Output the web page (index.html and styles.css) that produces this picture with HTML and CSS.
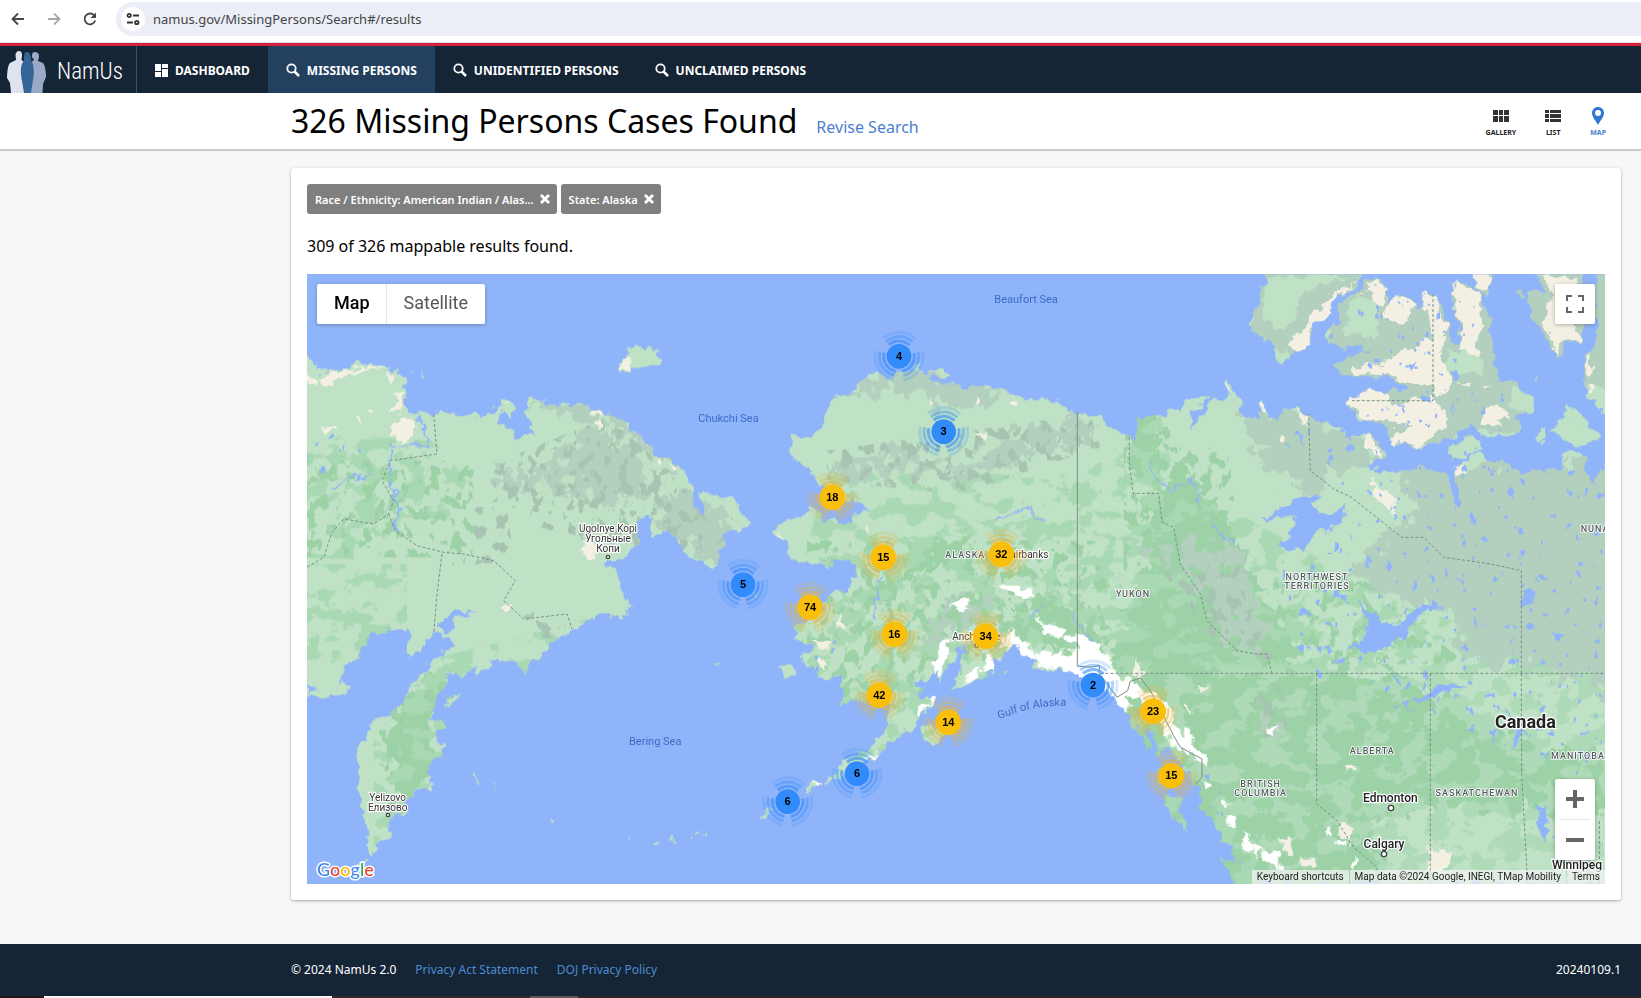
FILE: index.html
```html
<!DOCTYPE html>
<html lang="en">
<head>
<meta charset="utf-8">
<title>NamUs - Missing Persons Search</title>
<link rel="stylesheet" href="styles.css">
</head>
<body>
<div class="browser-bar">
  <button class="browser-btn" aria-label="Back"><svg viewBox="0 0 16 16" width="16" height="16"><path d="M14 8H3M8 2.500 2.500 8 8 13.500" fill="none" stroke="#474747" stroke-width="1.800"/></svg></button>
  <button class="browser-btn" aria-label="Forward"><svg viewBox="0 0 16 16" width="16" height="16"><path d="M2 8h11M8 2.500 13.500 8 8 13.500" fill="none" stroke="#a8a8a8" stroke-width="1.800"/></svg></button>
  <button class="browser-btn" aria-label="Reload"><svg viewBox="0 0 16 16" width="16" height="16"><path d="M13.200 9.500A5.400 5.400 0 1 1 12 4.200L13.500 6" fill="none" stroke="#474747" stroke-width="1.800"/><path d="M14 1.500V7H8.500z" fill="#474747"/></svg></button>
  <div class="address">
    <button class="site-info" aria-label="Site information"><svg viewBox="0 0 14 14" width="14" height="14" fill="none" stroke="#333" stroke-width="1.800"><circle cx="3.200" cy="3.500" r="1.700"/><path d="M7 3.500h6M1 10.500h6"/><circle cx="10.800" cy="10.500" r="1.700"/></svg></button>
    <input class="url" aria-label="Address" value="namus.gov/MissingPersons/Search#/results">
  </div>
</div>

<nav class="nav">
  <a class="logo" href="#" aria-label="NamUs home">
    <svg viewBox="0 0 40 42" width="40" height="42"><path d="M12 0c2 0 3 1.500 3 4s-.5 3.500-.5 5l4 3 1 30H4L3 32 0 27c0-6 1-13 3-15l6-3c0-2-.5-3-.5-5S10 0 12 0z" fill="#dfe3ed"/><path d="M28 1c2 0 4 1 4 4s-1 3.500-1 5l5 2c2 2 3 9 3 14l-3 7-.5 9H24l-1-30 4-3c-1-1.500-2.500-3-2-5 0-2 1-3 3-3z" fill="#9ba9c9"/><path d="M20 1c3 0 4 3 4 8l2 4c1 6 1 12 0 16l-2 13h-7l-2-12c-1-5-2-13 0-17l2-4c0-5 0-8 3-8z" fill="#346597"/></svg>
    <span>NamUs</span>
  </a>
  <a class="nav-item" href="#"><svg viewBox="0 0 13 13" width="13" height="13" fill="#fff"><path d="M0 0h6v7H0zM7 0h6v4H7zM7 5h6v8H7zM0 8h6v5H0z"/></svg>DASHBOARD</a>
  <a class="nav-item active" href="#"><svg viewBox="0 0 14 14" width="14" height="14" fill="none" stroke="#fff"><circle cx="5.500" cy="5.500" r="4.200" stroke-width="1.800"/><path d="m8.500 8.500 4.500 4.500" stroke-width="2.500"/></svg>MISSING PERSONS</a>
  <a class="nav-item" href="#"><svg viewBox="0 0 14 14" width="14" height="14" fill="none" stroke="#fff"><circle cx="5.500" cy="5.500" r="4.200" stroke-width="1.800"/><path d="m8.500 8.500 4.500 4.500" stroke-width="2.500"/></svg>UNIDENTIFIED PERSONS</a>
  <a class="nav-item" href="#"><svg viewBox="0 0 14 14" width="14" height="14" fill="none" stroke="#fff"><circle cx="5.500" cy="5.500" r="4.200" stroke-width="1.800"/><path d="m8.500 8.500 4.500 4.500" stroke-width="2.500"/></svg>UNCLAIMED PERSONS</a>
</nav>

<header class="page-head">
  <h1>326 Missing Persons Cases Found</h1>
  <a class="revise" href="#">Revise Search</a>
  <div class="views">
    <button class="view"><svg viewBox="0 0 16 18" width="16" height="18" fill="#333"><path d="M0 3h5v5H0zM6 3h4v5H6zM11 3h5v5h-5zM0 9h5v6H0zM6 9h4v6H6zM11 9h5v6h-5z"/></svg>GALLERY</button>
    <button class="view"><svg viewBox="0 0 16 18" width="16" height="18" fill="#333"><path d="M0 3h4v3H0zM5 3h11v3H5zM0 7h4v4H0zM5 7h11v4H5zM0 12h4v3H0zM5 12h11v3H5z"/></svg>LIST</button>
    <button class="view selected"><svg viewBox="0 0 12 18" width="12" height="18"><path d="M6 0a5.800 5.800 0 0 1 6 6c0 4-4 8-6 12C4 14 0 10 0 6a5.800 5.800 0 0 1 6-6zm0 3a3 3 0 1 0 0 6 3 3 0 0 0 0-6z" fill="#2f78d0" fill-rule="evenodd"/></svg>MAP</button>
  </div>
</header>

<main class="main">
  <section class="card">
    <div class="tags">
      <span class="tag">Race / Ethnicity: American Indian / Alas...<button aria-label="Remove race filter"><svg viewBox="0 0 10 10" width="10" height="10"><path d="m1 1 8 8M9 1 1 9" stroke="#fff" stroke-width="2.800"/></svg></button></span>
      <span class="tag">State: Alaska<button aria-label="Remove state filter"><svg viewBox="0 0 10 10" width="10" height="10"><path d="m1 1 8 8M9 1 1 9" stroke="#fff" stroke-width="2.800"/></svg></button></span>
    </div>
    <p class="count">309 of 326 mappable results found.</p>
    <div class="map">
      <svg class="map-art" viewBox="0 0 3894 1830" preserveAspectRatio="xMidYMid slice" role="img" aria-label="Map of Alaska, eastern Russia and north-western Canada">
        <defs>
          <filter id="rough" filterUnits="userSpaceOnUse" x="-60" y="-60" width="4014" height="1950" color-interpolation-filters="sRGB">
            <feTurbulence type="fractalNoise" baseFrequency="0.03" numOctaves="3" seed="4"/>
            <feDisplacementMap in="SourceGraphic" scale="42" xChannelSelector="R" yChannelSelector="G"/>
          </filter>
          <filter id="ragged" filterUnits="userSpaceOnUse" x="-60" y="-60" width="4014" height="1950" color-interpolation-filters="sRGB">
            <feTurbulence type="fractalNoise" baseFrequency="0.022" numOctaves="3" seed="9"/>
            <feDisplacementMap in="SourceGraphic" scale="150" xChannelSelector="R" yChannelSelector="G"/>
          </filter>
          <filter id="mottle" filterUnits="userSpaceOnUse" x="0" y="0" width="3894" height="1830" color-interpolation-filters="sRGB">
            <feTurbulence type="fractalNoise" baseFrequency="0.014 0.019" numOctaves="4" seed="12"/>
            <feColorMatrix values="0 0 0 0 0 0 0 0 0 0 0 0 0 0 0 24 0 0 0 -12.500" result="n"/>
            <feComposite in="SourceGraphic" in2="n" operator="in"/>
          </filter>
          <filter id="flecks" filterUnits="userSpaceOnUse" x="0" y="0" width="3894" height="1830" color-interpolation-filters="sRGB">
            <feTurbulence type="fractalNoise" baseFrequency="0.03 0.024" numOctaves="3" seed="31"/>
            <feColorMatrix values="0 0 0 0 0 0 0 0 0 0 0 0 0 0 0 0 24 0 0 -13.800" result="n"/>
            <feComposite in="SourceGraphic" in2="n" operator="in"/>
          </filter>
          <filter id="lakes" filterUnits="userSpaceOnUse" x="0" y="0" width="3894" height="1830" color-interpolation-filters="sRGB">
            <feTurbulence type="fractalNoise" baseFrequency="0.035 0.028" numOctaves="3" seed="77"/>
            <feColorMatrix values="0 0 0 0 0 0 0 0 0 0 0 0 0 0 0 0 0 30 0 -21.300" result="n"/>
            <feComposite in="SourceGraphic" in2="n" operator="in"/>
          </filter>
          <g id="land">
            <g transform="translate(-21 198)">
              <path d="M0 20L21 42 38 58 48 80 40 95 70 100 120 92 160 75 200 72 250 78 285 95 310 120 322 155 316 180 308 200 330 212 355 222 400 220 450 212 460 208 490 220 555 232 575 222 600 182 630 182 640 195 638 225 600 215 602 252 640 275 645 298 670 300 692 285 690 250 682 225 668 215 684 205 682 172 720 182 780 195 865 196 900 210 950 235 985 255 990 275 1040 300 1060 330 1085 355 1130 375 1160 400 1175 430 1178 475 1188 515 1205 515 1210 485 1200 455 1225 465 1285 468 1300 490 1335 525 1345 545 1320 578 1270 575 1268 605 1250 640 1268 650 1240 685 1200 670 1150 640 1140 605 1100 580 1060 590 1050 570 1054 525 1040 525 1015 540 1012 580 1020 600 985 640 960 655 930 655 905 670 915 690 945 685 960 720 962 765 988 800 975 835 905 822 850 850 820 865H0z"/>
              <path d="M955 75L975 40 1005 20 1040 18 1070 38 1088 58 1065 80 1020 88 962 98zM368 85l8 10 2 22-8-6zM336 92l6 8-4 3z"/>
            </g>
            <path transform="translate(-21 978)" d="M0 0H985L988 20 975 55 905 42 850 70 815 92 770 125 735 150 720 175 690 190 670 222 655 195 635 178 575 185 545 210 530 235 530 195 495 215 485 235 475 215 440 225 435 260 415 280 390 330 390 360 410 358 432 370 415 395 418 430 432 440 430 470 410 470 395 480 380 510 392 545 385 568 345 568 330 590 318 610 320 640 270 655 268 695 245 735 210 768 200 740 198 690 185 640 180 590 170 540 168 480 180 435 205 410 215 385 210 365 240 358 275 335 310 300 330 260 365 220 385 190 420 160 450 140 455 118 422 102 400 100 375 130 330 178 318 150 330 115 325 88 280 88 240 100 210 110 180 160 145 190 125 215 120 250 150 258 155 272 130 285 21 295H0zM440 318L455 290 478 275 478 292zM515 518L530 520 535 535 548 553 532 545zM750 657L772 657 766 668zM575 551l10 4-4 3zM1240 185l20 12-15-2zM1170 710L1190 700 1205 690 1200 705zM1068 718l10 4 0 9-8 0zM1110 722l8-8 6 8-8 6zM1212 705h20v3h-20zM160 800L195 775 205 780 175 805zM985 710h8v6h-8zM914 710h8v4zM960 732l14 10zM1383 655L1410 625V640z"/>
            <path transform="translate(1299 138)" d="M152 352L225 345 250 320 265 265 300 225 355 200 380 160 440 165 520 150 535 128 550 140 550 165 570 155 625 152 630 165 605 175 605 190 640 195 680 210 700 195 740 195 775 218 840 225 880 242 930 232 960 245 1000 275 1080 288 1110 320 1160 345 1200 370 1210 350 1180 325 1225 300 1240 278 1255 300 1300 265 1350 250V900H250L240 870 250 840 285 815 325 805 340 775 335 740 330 705 290 715 275 738 240 735 200 725 145 715 140 660 115 655 92 640 125 605 165 595 200 570 230 570 250 600 330 600 385 570 375 545 350 545 300 525 240 500 225 470 190 440 148 400z"/>
            <path transform="translate(1299 918)" d="M350 0L320 30 275 40 250 60 245 90 190 130 165 140 160 170 175 185 215 205 180 240 220 265 235 290 275 292 300 290 300 320 310 345 300 370 345 370 400 350 440 370 445 400 445 440 420 470 385 505 340 530 290 560 280 590 300 595 345 560 395 540 440 500 490 460 535 420 560 390 590 360 560 350 520 345 555 325 510 320 560 295 585 275 600 310 630 260 655 215 690 190 660 240 645 290 640 325 680 320 720 295 760 275 765 240 790 220 830 205 860 235 890 245 890 265 960 275 1010 280 1050 300 1080 320 1110 345 1130 370 1160 390 1180 430 1200 470 1225 520 1230 490 1215 450 1250 460 1240 500 1250 530 1280 500 1330 560 1365 615 1385 650 1375 690 1420 720 1440 780 1460 800 1500 850V0zM112 268L150 255 172 270 168 288 130 290zM545 450L570 430 600 440 615 470 580 490 550 485zM1280 650L1330 655 1320 690 1350 760 1310 730 1285 690zM197 632L205 612 230 600 246 608 225 624zM250 600L272 582 280 590 260 604zM62 718L66 700 90 685 105 690 85 702zM30 500l10 2zM1242 580L1270 575 1275 610 1255 600zM780 290L800 262 806 268zM46 46l16-6-4 14z"/>
            <path transform="translate(2529 -12)" d="M-40 450L0 430 50 440 100 400 170 378 175 390 120 430 60 500 70 520 130 465 190 390 240 375 220 345 235 340 260 375 275 425 320 455 330 425 330 400 345 380 352 425 380 455 395 412 440 412 475 430 490 450 550 465 600 490 640 490 680 505 705 540 700 560 665 580 665 595 700 605 760 608 820 590 850 590 890 620 905 670 935 720 925 660 910 600 940 575 980 550 1030 575 1060 570 1090 600 1150 605 1230 605 1235 560 1275 540 1310 575 1315 620 1340 650 1345 590 1365 575H1400V960H-40z"/>
            <path transform="translate(2529 888)" d="M-30 0H1400V942H345L320 910 270 870 265 835 230 790 195 760 190 720 150 700 135 600 100 540-30 300zM215 868L260 870 300 895 330 920 350 960H265L240 900z"/>
          </g>
          <g id="isles" transform="translate(2529 -12)">
            <path d="M350-20H660L620 50 555 85 520 150 490 165 480 235 430 245 400 278 385 265 370 230 345 215 330 190 303 185 315 130 330 100 325 70 345 40z"/>
            <path d="M705 60L700 30 660 30 600 75 555 120 570 150 535 175 533 215 570 240 660 235 590 260 555 290 580 325 640 325 700 320 750 335 785 360 690 360 620 372 592 392 600 420 630 455 700 460 720 480 725 520 780 530 850 525 920 500 960 460 1000 490 1060 505 1110 490 1120 460 1085 435 1145 430 1150 380 1100 340 1060 325 1025 285 1035 235 1020 150 1000 100 990 70 950 35 910 30 905 100 925 170 930 210 900 215 885 120 860 90 845 70 820 75 835 95 800 130 800 100 740 70 720 95zM890 555L905 525 960 505 995 505 990 540 940 560 900 568zM1165 485l20-10 0 20-15 20-8-5zM1160 325h12v14h-12z"/>
            <path d="M1095 70L1115 62 1140 100 1145 140 1170 165 1195 220 1225 255 1245 240 1245 210 1285 218 1300 180V-20H1120L1175 45 1175 80 1150 60 1130 80zM1335-20H1400V430H1365L1325 395 1302 360 1305 260 1325 240 1340 200zM1200 480L1235 460 1245 410 1260 405 1300 440 1325 475 1345 505 1305 535 1240 510zM950-20H1028L1025 50 1005 78 980 50z"/>
          </g>
          <mask id="land-mask" maskUnits="userSpaceOnUse" x="0" y="0" width="3894" height="1830"><g filter="url(#rough)" fill="#fff"><use href="#land"/><use href="#isles"/></g></mask>
          <g id="rings" fill="none" stroke-width="9">
            <circle r="46" pathLength="360" stroke-dasharray="90 24 90 36 84 36" transform="rotate(-12)" opacity=".6"/>
            <circle r="59" pathLength="360" stroke-dasharray="90 24 90 36 84 36" transform="rotate(-12)" opacity=".4"/>
            <circle r="72" pathLength="360" stroke-dasharray="90 24 90 36 84 36" transform="rotate(-12)" opacity=".2"/>
          </g>
          <g id="blue" class="blue"><use href="#rings"/><circle r="37"/></g>
          <g id="gold" class="gold"><use href="#rings"/><circle r="39"/></g>
        </defs>
        <rect width="3894" height="1830" fill="#90b4fa"/>
        <g mask="url(#land-mask)">
          <rect width="3894" height="1830" fill="#bfe1c5"/>
          <!-- forest -->
          <g filter="url(#ragged)" fill="#9cd2a6">
            <path d="M2420 1160L2500 900 2530 700 2620 560 2740 700 2860 950 3000 1180 3280 1200 3500 1330 3700 1420 3940 1420V1640L3600 1600 3370 1600 3190 1640 3240 1860H2400z"/>
            <path d="M2460 460l70-40 40 110-40 80-50-20z"/>
            <path d="M320 1250L420 1200 440 1260 370 1330 380 1480 360 1560 300 1600 240 1560 260 1420 230 1380z"/>
            <path d="M2100 980L2300 1000 2400 1100 2300 1160 2100 1060z"/>
            <path d="M1640 1020L1700 960 1760 900 1900 800 1980 780 1960 830 1800 920 1720 1000z"/>
          </g>
          <g filter="url(#mottle)" fill="#a9d9b3">
            <path d="M0 480L380 500 480 620 420 740 240 760 220 860 0 850zM0 870H300V1180H0zM400 1150L900 1020 700 1200 430 1230zM340 1180H460V1500L380 1520 200 1720V1400z"/>
            <path d="M1560 600H2330L2560 420 2600 600 2760 700 3300 1000 3894 1180V1830H2500L2300 1250 1500 1500 1450 1000z"/>
          </g>
          <!-- tundra and mountain ground -->
          <g filter="url(#ragged)" fill="#b3cfbd">
            <path d="M570 590L740 590 790 500 900 460 960 520 1040 600 1000 650 930 700 860 680 820 640 720 640 600 650z"/>
            <path d="M1040 680l100-30 130 80-10 160-60-30-40-60-80-20z"/>
            <path d="M640 380l120 0 140 20 100 60 100 80 20 60-80-60-120-90-160-30z"/>
            <path d="M1680 300L1850 280 2070 350 2040 400 1880 380 1820 350 1700 350 1600 380z"/>
            <path d="M1880 580L2000 560 2120 480 2200 450 2340 450 2380 480 2280 520 2120 560 1980 600z"/>
            <path d="M1580 570l240-40 80 60-100-10-200 40z"/>
            <path d="M2460 820L2620 790 2760 800 2820 900 2880 1060 2850 1140 2780 1120 2720 990 2600 870z"/>
            <path d="M1860 1120l10-90 140-80 60 20-120 100z"/>
            <path d="M2800 420L2960 400 3200 500 3250 560 3100 580 3050 650 2960 640 2860 560z"/>
            <path d="M3260 580L3940 560V1280L3760 1200 3640 1180 3480 1160 3420 1020 3200 960 3130 880 3250 770 3340 720z"/>
            <path d="M2840 1280l60 60 40 60-30 20-60-60z"/>
          </g>
          <g filter="url(#flecks)" fill="#a6c4b1">
            <path d="M560 570L900 430 1100 600 1250 800 1150 850 850 820 560 700zM330 700L600 700 620 860 420 880zM1560 530L2350 420 2380 520 1950 660 1560 620zM2460 760L2780 760 2900 1160 2740 1120zM2840 1240h100v180h-100zM1850 960h260v160h-260zM640 1010l120 10 30 80-100-10z"/>
          </g>
          <g filter="url(#flecks)" fill="#9cd2a6"><path d="M0 560H500V850H0zM1500 800H2400V1300H1500zM2900 900H3150L3480 1170H2900zM2450 520H2780V900H2450z"/></g>
          <g filter="url(#mottle)" fill="#aedab8"><path d="M2560 1180H3894V1500H2560zM2700 1500H3894V1830H2900z"/></g>
          <g transform="translate(2529 -12)" filter="url(#rough)">
            <path fill="#b3cfbd" d="M300-20H1400V350L1150 340 1110 490 1000 480 920 500 850 530 740 530 590 400 540 320 530 150 450 270 300 190z"/>
            <path fill="#bfe1c5" d="M345 20L600 20 460 60 440 130 410 180 340 150zM600 90L690 80 680 200 580 190zM890 240L980 240 1000 310 890 310zM1080 340L1150 380 1140 430 1070 400zM1250 430l90 70-50 30-80-50z"/>
          </g>
          <!-- bare ground -->
          <g filter="url(#rough)" fill="#f3efe3">
            <g transform="translate(2529 -12)"><path d="M640 20L560 80 520 150 480 190 485 235 430 245 410 230 460 170 540 80 590 50zM655 50L690 28 708 70 690 110 650 60 610 90zM735 72L800 105 760 165 710 160 700 130zM600 285L700 280 780 230 860 200 870 350 790 340 700 310 620 318zM592 392L620 370 700 362 720 400 850 380 900 450 860 490 800 525 725 515 740 480 790 475 720 450 640 455zM910 30L985 65 995 120 980 260 930 230 940 180 910 110zM820 75L850 75 890 170 870 240 905 330 880 380 850 370 850 200zM950 12H1028L1020 60 1000 60zM1095 65L1140 140 1110 110zM1180 20H1280L1260 130 1290 210 1240 210 1220 250 1180 150 1210 80zM1010 410L1040 400 1080 440 1040 450 1060 480 990 455zM640 490L695 530 690 560 650 535zM670 630L735 690 735 730 670 680zM915 590L945 580 940 610 920 620zM440 415L475 430 470 475zM335 390L350 390 350 430 330 430zM225 345L245 370 225 360zM395 485L405 515 380 510zM1310 260h15v50h-15zM1315 340h15v35h-15zM930 340l30 0-10 20zM1000 352l20 0-5 14z"/></g>
            <g transform="translate(-21 198)"><path d="M268 255L300 228 345 245 352 285 320 305 265 290zM60 110L120 95 200 78 250 82 180 95 110 120 90 140zM21 100L55 115 50 140 25 125zM260 85L280 110 270 135zM290 150L315 160 300 215 260 215 285 195zM70 260L105 260 85 280zM165 220l10 0 0 18-10 0zM205 215l15-4-10 15zM870 205L910 215 915 228 880 222zM885 245h18v12h-18zM1070 350l12 20-12 0zM1105 378l25 10-10 8zM850 600L895 630 880 660 850 640zM975 45h20v40L965 95l0-15zM600 185l30 0 0 8zM600 800l30-8-5 18z"/></g>
            <g transform="translate(1299 918)"><path d="M210 185L280 185 270 205 225 205zM220 230L265 235 260 268zM295 110h12v30h-12zM775 165L830 165 820 210 780 205zM1180 240l20 10 10 50-30-20zM1335 370l15 20-15 5zM1380 315l20 10-20 10z"/></g>
            <g transform="translate(2529 888)"><path d="M835 835L910 850 895 890 870 920 835 890zM565 760L615 775 600 820 575 800zM455 865L495 870 490 900 460 890zM395 805L425 820 425 865 400 840zM585 590h22v14h-22zM150 345l18 0-10 18z"/></g>
            <g transform="translate(1299 138)"><path d="M570 228l15 25-10 0zM710 225l12 20-20 10zM805 250l25-10-5 22zM700 340l38 0-5 22zM305 570l40 10-20 20zM115 645l25 4-20 8zM380 615l10 15-14 0z"/></g>
          </g>
          <!-- glaciers -->
          <g filter="url(#rough)" fill="#fff" stroke="#fff" stroke-width="6">
            <g transform="translate(1299 918)"><path d="M890 220L960 220 1020 215 1020 195 975 175 1010 165 1060 190 1110 235 1110 265 1140 300 1180 300 1200 340 1240 340 1280 380 1310 440 1330 480 1400 530 1400 555 1360 530 1290 480 1270 430 1200 350 1150 345 1165 385 1150 390 1100 340 1060 300 1000 280 900 250zM820 160L850 190 890 240 840 225 810 190zM900 120L975 150 970 165 920 160zM580 280L590 220 630 165 620 220 600 285zM675 315L690 280 720 260 715 290zM735 275L740 240 765 240 755 275zM640 75L690 50 690 75 650 95zM780 20L830 20 885 45 870 55 790 30zM530 385L560 378 540 405zM1335 445L1360 480 1335 490zM1400 605l14 20-14 4zM1450 655l12 18-12 0zM1465 710l22 0 0 22-18 0zM385 522l15 4-20 10zM575 358l12 4-14 8zM220 605l22 0-6 12z"/></g>
            <g transform="translate(2529 888)"><path d="M280 790L300 820 305 840 285 830zM310 830l20 10-10 22zM340 840L390 850 390 895 345 870zM535 775l10 10-10 10zM610 870l12 10-6 20zM565 815h12v12h-12zM355 472h14v14h-14z"/></g>
          </g>
          <!-- lakes and rivers -->
          <g filter="url(#rough)" fill="#90b4fa">
            <g transform="translate(2529 -12)"><path d="M330 745L380 720 440 690 525 672 490 705 500 730 560 725 590 700 580 750 530 785 500 780 455 850 430 835 385 830 430 800 420 770 440 740 380 745zM540 820h15v30h-12zM725 715l20 30-10 10zM745 395l20 4-8 12zM765 285l35-8-15 22z"/></g>
            <g transform="translate(2529 888)"><path d="M625 95L660 130 700 155 750 165 800 110 870 105 870 118 820 120 760 195 720 215 700 245 640 250 600 230 640 210 655 170zM800 395L850 345 900 340 950 355 870 370 820 395zM760 390l20 4-10 25zM1120 70L1145 60 1145 105 1120 110zM1065 415L1110 460 1105 510 1080 545 1100 490zM550 70l35 4 5 16-35-6zM1155 710L1190 710 1190 820 1170 790zM945 490l25-20 0 14z"/></g>
            <g transform="translate(-21 978)"><path d="M425 95L430 40 475 28 500 40 535 42 465 55 455 100zM21 252L55 270 21 278z"/></g>
            <path transform="translate(1299 138)" d="M565 175l30-8 15 16-25 10z"/>
          </g>
          <g filter="url(#lakes)" fill="#90b4fa"><path d="M2850 450L3894 560V1400L3650 1830H3800V1500L3000 1200 2880 900 3200 700zM0 480H200V620H0zM1480 1100H1640V1220H1480zM3050 80H3600V540H3050zM2560 1300l180 250 20 200-200-300z"/></g>
          <g fill="none" stroke="#90b4fa" stroke-width="5" stroke-linejoin="round" filter="url(#rough)">
            <path d="M250 520V640L280 700 265 770M330 430L375 520 250 510M70 650L130 610 200 600M2060 740L2170 700 2210 750M1700 1040L1720 920M2534 565L2550 620 2590 645 2660 620 2685 690M2720 730V760L2790 815M2350 1100l-60-80M2160 1040l40-40"/>
          </g>
        </g>
        <!-- borders -->
        <g fill="none" stroke="#7b8f86" stroke-width="3">
          <path d="M2311 413V1176L2352 1180 2378 1174 2376 1196 2430 1270 2462 1250 2470 1222 2500 1212 2530 1250 2600 1385 2620 1420 2685 1455V1510L2665 1532"/>
          <g stroke-dasharray="9 6"><path d="M2380 1198H3894M3029 1198V1590L3090 1640 3140 1720 3210 1780V1830M3370 1198V1830M3643 1198L3644 1500 3662 1830M3643 1198V890L3540 868 3410 850 3350 790H3285L3130 668 3080 645 3010 590 3005 420M3378 60V380H3135M3877 1830V1640"/>
            <path d="M2467 490V560L2478 658H2555L2565 745 2600 760 2620 870 2680 960 2700 1040 2790 1130 2850 1140 2880 1140 2895 1198M380 420L390 540 250 560 225 620 260 680 245 720 200 750 110 735 75 775 50 850 0 880M245 720L265 770 330 815 410 835 470 840 560 860 625 920 590 980 650 1035 780 1020 795 1065M405 840L390 960 380 1080"/></g>
        </g>
        <!-- labels -->
        <g class="water-label">
          <text x="1174" y="443">Chukchi Sea</text><text x="2062" y="86">Beaufort Sea</text><text x="966" y="1413">Bering Sea</text>
          <path id="gulf" d="M2077 1336Q2180 1290 2292 1296" fill="none"/><text><textPath href="#gulf">Gulf of Alaska</textPath></text>
        </g>
        <g class="town-label">
          <text x="903" y="775">Ugolnye Kopi</text><text x="903" y="805">Угольные</text><text x="903" y="835">Копи</text>
          <text x="242" y="1580">Yelizovo</text><text x="242" y="1610">Елизово</text>
          <text x="2159" y="851">Fairbanks</text><text x="2008" y="1099">Anchorage</text>
        </g>
        <g class="city-label"><text x="3250" y="1584">Edmonton</text><text x="3231" y="1722">Calgary</text><text x="3810" y="1785">Winnipeg</text></g>
        <g class="region-label">
          <text x="1975" y="852">ALASKA</text><text x="2478" y="969">YUKON</text><text x="3030" y="917">NORTHWEST</text><text x="3030" y="945">TERRITORIES</text>
          <text x="3196" y="1440">ALBERTA</text><text x="2861" y="1539">BRITISH</text><text x="2861" y="1566">COLUMBIA</text><text x="3510" y="1566">SASKATCHEWAN</text><text x="3813" y="1455">MANITOBA</text><text x="3894" y="774">NUNAVUT</text>
        </g>
        <text class="country-label" x="3655" y="1362">Canada</text>
        <g fill="#fff" stroke="#444" stroke-width="4"><circle cx="3252" cy="1602" r="8"/><circle cx="3231" cy="1740" r="8"/><circle cx="903" cy="849" r="5"/><circle cx="243" cy="1623" r="5"/><circle cx="2008" cy="1115" r="5"/></g>
        <!-- case clusters -->
        <g class="clusters">
          <g transform="translate(1776 247)"><use href="#blue"/><text y="11">4</text></g>
          <g transform="translate(1910 473)"><use href="#blue"/><text y="11">3</text></g>
          <g transform="translate(1308 932)"><use href="#blue"/><text y="11">5</text></g>
          <g transform="translate(1650 1499)"><use href="#blue"/><text y="11">6</text></g>
          <g transform="translate(1442 1583)"><use href="#blue"/><text y="11">6</text></g>
          <g transform="translate(2358 1233)"><use href="#blue"/><text y="11">2</text></g>
          <g transform="translate(1576 670)"><use href="#gold"/><text y="11">18</text></g>
          <g transform="translate(1729 850)"><use href="#gold"/><text y="11">15</text></g>
          <g transform="translate(2083 841)"><use href="#gold"/><text y="11">32</text></g>
          <g transform="translate(1509 1000)"><use href="#gold"/><text y="11">74</text></g>
          <g transform="translate(1762 1081)"><use href="#gold"/><text y="11">16</text></g>
          <g transform="translate(2036 1087)"><use href="#gold"/><text y="11">34</text></g>
          <g transform="translate(1717 1264)"><use href="#gold"/><text y="11">42</text></g>
          <g transform="translate(1924 1345)"><use href="#gold"/><text y="11">14</text></g>
          <g transform="translate(2538 1312)"><use href="#gold"/><text y="11">23</text></g>
          <g transform="translate(2593 1505)"><use href="#gold"/><text y="11">15</text></g>
        </g>
      </svg>
      <div class="map-types"><button class="on">Map</button><button>Satellite</button></div>
      <button class="fullscreen" aria-label="Toggle fullscreen"><svg viewBox="0 0 18 18" width="18" height="18"><path d="M1 6V1h5M12 1h5v5M17 12v5h-5M6 17H1v-5" fill="none" stroke="#666" stroke-width="2"/></svg></button>
      <div class="zoom"><button aria-label="Zoom in"><svg viewBox="0 0 18 18" width="18" height="18"><path d="M9 0v18M0 9h18" stroke="#666" stroke-width="4"/></svg></button><button aria-label="Zoom out"><svg viewBox="0 0 18 18" width="18" height="18"><path d="M0 9h18" stroke="#666" stroke-width="4"/></svg></button></div>
      <a class="google" href="#" aria-label="Google"><span class="g-b">G</span><span class="g-r">o</span><span class="g-y">o</span><span class="g-b">g</span><span class="g-g">l</span><span class="g-r">e</span></a>
      <div class="attribution"><button>Keyboard shortcuts</button><span>Map data ©2024 Google, INEGI, TMap Mobility</span><a href="#">Terms</a></div>
    </div>
  </section>
</main>

<footer class="footer">
  <span>© 2024 NamUs 2.0</span>
  <a href="#">Privacy Act Statement</a>
  <a href="#">DOJ Privacy Policy</a>
  <span class="version">20240109.1</span>
</footer>
<div class="desktop-edge"></div>
</body>
</html>
```
FILE: styles.css
```css
* { box-sizing: border-box; }
body { margin: 0; min-height: 100vh; display: flex; flex-direction: column; background: #f7f7f7; color: #000; font-family: "Noto Sans", "Open Sans", sans-serif; overflow-x: hidden; }
button { font: inherit; color: inherit; border: 0; padding: 0; background: none; cursor: pointer; }
a { text-decoration: none; color: #4a7fd0; }
svg { display: block; flex: none; }

.browser-bar { display: flex; align-items: center; gap: 20px; padding: 2px 0 6px 10px; background: #fff; border-bottom: 1px solid #ddd; }
.browser-btn { width: 16px; }
.address { flex: 1; display: flex; align-items: center; gap: 8px; height: 34px; margin-left: -2px; padding-left: 5px; border-radius: 17px 0 0 17px; background: #ebeef7; }
.site-info { display: grid; place-items: center; width: 24px; height: 24px; border-radius: 50%; background: #fff; }
.url { flex: 1; border: 0; padding: 0; background: none; outline: 0; color: #444; font: 13px "Noto Sans", "Open Sans", sans-serif; }

.nav { display: flex; height: 50px; border-top: 3px solid #d4213d; background: #152536; }
.logo { display: flex; align-items: flex-end; gap: 10px; width: 137px; padding-left: 7px; border-right: 1px solid #2b5580; color: #fff; font: 300 23px/42px "Roboto Condensed", "Liberation Sans Narrow", Roboto, sans-serif; }
.nav-item { display: flex; align-items: center; gap: 7px; padding: 1px 18px 0; color: #fff; font-size: 12px; font-weight: 700; }
.nav-item.active { background: #23405f; }

.page-head { display: flex; align-items: baseline; gap: 19px; height: 58px; padding: 0 35px 0 291px; border-bottom: 2px solid #c9c9c9; background: #fff; }
h1 { margin: 0; font-size: 32px; font-weight: 400; line-height: 56px; white-space: nowrap; }
.revise { font-size: 16px; }
.views { display: flex; gap: 29px; align-self: flex-start; margin-left: auto; padding-top: 14px; }
.view { display: flex; flex-direction: column; align-items: center; gap: 3px; color: #222; font-size: 7px; font-weight: 700; line-height: 10px; }
.view.selected { color: #4a7fd0; }

.main { flex: 1; padding: 17px 20px 44px 291px; }
.card { padding: 16px; border-radius: 3px; background: #fff; box-shadow: 0 1px 3px #0005; }
.tags { display: flex; gap: 4px; }
.tag { display: flex; align-items: center; gap: 6px; height: 30px; padding: 0 7px 0 8px; border-radius: 3px; background: #7f7f7f; color: #fff; font-size: 11px; font-weight: 600; }
.count { margin: 20px 0 16px; font-size: 16px; line-height: 24px; }

.map { position: relative; aspect-ratio: 1298 / 610; overflow: hidden; font-family: Roboto, sans-serif; }
.map-art { width: 100%; height: 100%; }
.map-art text { font-family: Roboto, sans-serif; }
.water-label text { font-size: 33px; fill: #3b6bc4; }
.town-label text, .city-label text, .region-label text { text-anchor: middle; paint-order: stroke; stroke: #fff; stroke-width: 7px; stroke-linejoin: round; }
.town-label text { font-size: 30px; fill: #333; }
.city-label text { font-size: 36px; font-weight: 500; fill: #222; }
.region-label text { font-size: 27px; font-weight: 500; letter-spacing: 3px; fill: #555b60; stroke-width: 5px; }
.map-art .country-label { font-size: 54px; font-weight: 700; text-anchor: middle; fill: #222; paint-order: stroke; stroke: #fff; stroke-width: 7px; }
.clusters text { font-family: "Liberation Sans", sans-serif; font-size: 33px; font-weight: 700; text-anchor: middle; }
.blue { fill: #318bfb; stroke: #318bfb; }
.gold { fill: #fabe0c; stroke: #e5b33c; }
.blue > circle, .gold > circle { stroke: none; }

.map-types { position: absolute; left: 10px; top: 10px; display: flex; height: 40px; border-radius: 2px; background: #fff; box-shadow: 0 1px 4px #0004; font-size: 18px; line-height: 38px; color: #565656; }
.map-types button { padding: 0 17px 2px; }
.map-types .on { color: #000; font-weight: 500; border-right: 1px solid #e6e6e6; padding-right: 16px; }
.fullscreen, .zoom { position: absolute; right: 10px; width: 40px; border-radius: 2px; background: #fff; box-shadow: 0 1px 4px #0004; }
.fullscreen { top: 10px; height: 40px; display: grid; place-items: center; }
.zoom { bottom: 24px; display: grid; }
.zoom button { height: 40px; display: grid; place-items: center; }
.zoom button + button { margin: 0 5px; border-top: 1px solid #e6e6e6; height: 41px; }
.google { position: absolute; left: 10px; bottom: 3px; font: 500 18px/24px Lato, sans-serif; -webkit-text-stroke: 3px #fff; }
.google span { paint-order: stroke fill; }
.g-b { color: #4285f4; }
.g-r { color: #ea4335; }
.g-y { color: #fbbc05; }
.g-g { color: #34a853; }
.attribution { position: absolute; right: 0; bottom: 0; display: flex; font-size: 10px; line-height: 14px; color: #222; }
.attribution > * { padding: 0 5px; background: #f5f5f5b3; color: #222; }
.attribution > * + * { margin-left: 1px; }

.footer { display: flex; align-items: center; gap: 19px; height: 52px; padding: 0 20px 2px 291px; background: #152536; color: #fff; font-size: 12px; }
.footer a { color: #4c8bd0; }
.version { margin-left: auto; }
.desktop-edge { height: 2px; background: linear-gradient(90deg, #231a18 44px, #f4f4f4 44px 332px, #332a28 332px 530px, #5e5654 530px 578px, #2b2523 578px); }
```
